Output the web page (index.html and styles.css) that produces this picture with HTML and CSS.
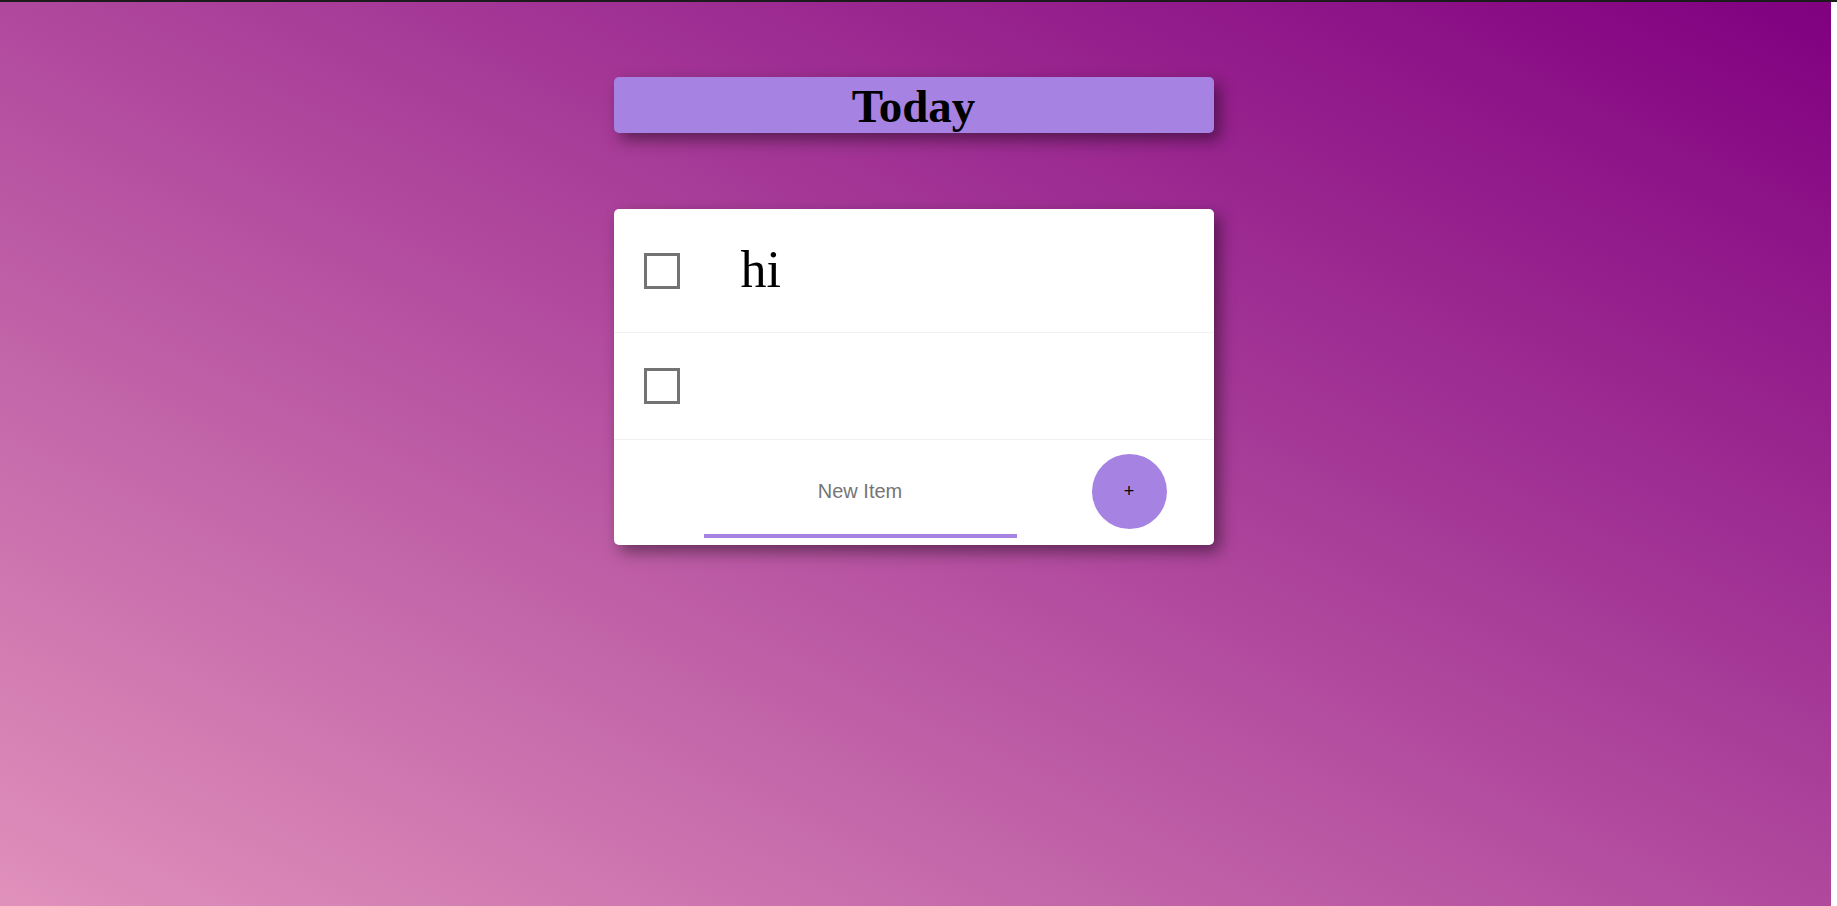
FILE: index.html
```html
<!DOCTYPE html>
<html>
<head>
<meta charset="utf-8">
<title>Today</title>
<link rel="stylesheet" href="styles.css">
</head>
<body>
<div class="page">
  <div class="box heading">
    <h1>Today</h1>
  </div>
  <div class="box list">
    <div class="item item-tall">
      <span class="check"></span>
      <p class="item-text">hi</p>
    </div>
    <div class="item">
      <span class="check"></span>
      <p class="item-text"></p>
    </div>
    <form class="new-item">
      <input class="new-input" type="text" placeholder="New Item">
      <button class="add-btn" type="button">+</button>
    </form>
  </div>
</div>
</body>
</html>
```
FILE: styles.css
```css
html, body {
  margin: 0;
  padding: 0;
  background: #ffffff;
}
body {
  border-top: 2px solid #1b1b1b;
}
.page {
  width: 1831px;
  min-height: 904px;
  box-sizing: border-box;
  background-image: linear-gradient(to top right, #e091bb, #800080);
  display: flex;
  flex-direction: column;
  align-items: center;
  padding-top: 75px;
  padding-right: 4px;
}
.box {
  width: 600px;
  border-radius: 5px;
  box-shadow: 6px 7px 16px rgba(0, 0, 0, 0.45);
}
.heading {
  height: 56px;
  background: #a683e3;
  display: flex;
  align-items: center;
  justify-content: center;
}
.heading h1 {
  margin: 0;
  font-family: "Liberation Serif", "Times New Roman", serif;
  font-size: 47px;
  font-weight: bold;
  color: #000;
  line-height: 1;
  position: relative;
  top: 1px;
}
.list {
  margin-top: 76px;
  background: #ffffff;
}
.item {
  display: flex;
  align-items: center;
  height: 106px;
  border-bottom: 1px solid #f1f1f1;
  padding-left: 30px;
}
.item-tall {
  height: 123px;
}
.check {
  width: 36px;
  height: 36px;
  box-sizing: border-box;
  border: 3px solid #737373;
  flex: none;
}
.item-text {
  margin: 0 0 0 61px;
  font-family: "Liberation Serif", "Times New Roman", serif;
  font-size: 52px;
  color: #000;
  line-height: 1;
  position: relative;
  top: -1px;
}
.new-item {
  display: flex;
  align-items: center;
  height: 105px;
  padding-left: 90px;
  margin: 0;
}
.new-input {
  width: 313px;
  height: 92px;
  box-sizing: border-box;
  border: none;
  background: transparent;
  text-align: center;
  font-family: "Liberation Sans", Arial, sans-serif;
  font-size: 20px;
  box-shadow: inset 0 -4px 0 0 #a683e3;
  outline: none;
  padding: 0;
  position: relative;
  top: -1px;
}
.new-input::placeholder {
  color: #757575;
}
.add-btn {
  margin-left: 75px;
  width: 75px;
  height: 75px;
  border-radius: 50%;
  border: none;
  background: #a683e3;
  color: #000;
  font-family: "Liberation Sans", Arial, sans-serif;
  font-size: 18px;
  padding: 0;
  position: relative;
  top: -1px;
}
```
